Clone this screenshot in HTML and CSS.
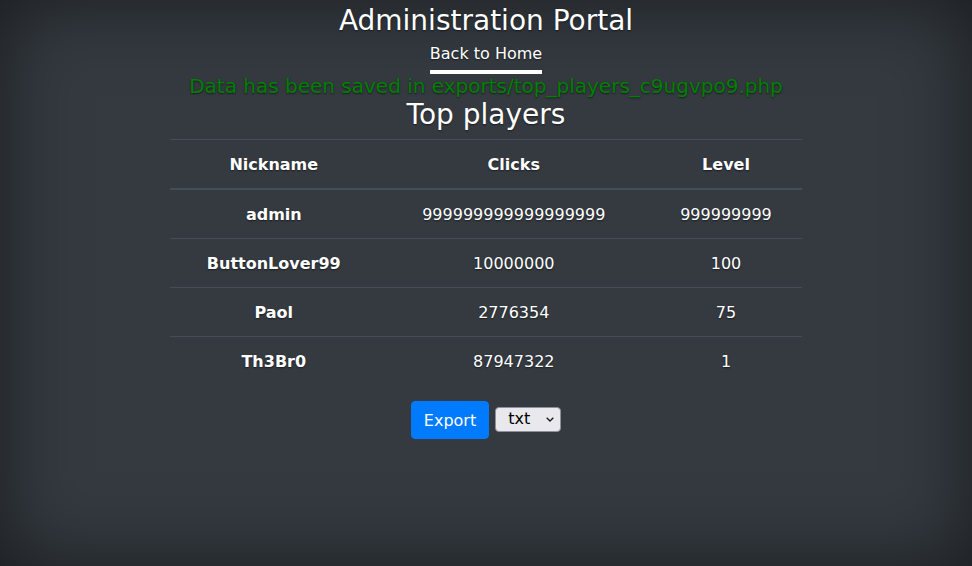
FILE: index.html
```html
<!DOCTYPE html>
<html lang="en">
<head>
<meta charset="utf-8">
<title>Administration Portal</title>
<link rel="stylesheet" href="styles.css">
</head>
<body>
<div class="cover">
  <header class="masthead">
    <h3 class="brand">Administration Portal</h3>
    <nav class="nav">
      <a class="nav-link active" href="#">Back to Home</a>
    </nav>
  </header>
  <main class="content">
    <h5 class="notice">Data has been saved in exports/top_players_c9ugvpo9.php</h5>
    <h3 class="section-title">Top players</h3>
    <table class="players">
      <thead>
        <tr><th>Nickname</th><th>Clicks</th><th>Level</th></tr>
      </thead>
      <tbody>
        <tr><th>admin</th><td>999999999999999999</td><td>999999999</td></tr>
        <tr><th>ButtonLover99</th><td>10000000</td><td>100</td></tr>
        <tr><th>Paol</th><td>2776354</td><td>75</td></tr>
        <tr><th>Th3Br0</th><td>87947322</td><td>1</td></tr>
      </tbody>
    </table>
    <form class="export">
      <button type="button" class="btn-export">Export</button>
      <span class="select-wrap">
        <select class="format">
          <option>txt</option>
          <option>csv</option>
          <option>xml</option>
        </select>
        <svg class="chevron" width="8" height="5" viewBox="0 0 8 5" aria-hidden="true"><path d="M0.7 0.7 L4 4 L7.3 0.7" fill="none" stroke="#1a1a1a" stroke-width="1.3"/></svg>
      </span>
    </form>
  </main>
</div>
</body>
</html>
```
FILE: styles.css
```css
html, body {
  height: 100%;
}
body {
  margin: 0;
  background-color: #343a40;
  box-shadow: inset 0 0 5rem rgba(0, 0, 0, .5);
  color: #fff;
  text-shadow: 0 .05rem .1rem rgba(0, 0, 0, .5);
  font-family: "DejaVu Sans", sans-serif;
  font-size: 16px;
  line-height: 1.5;
}
.cover {
  width: 632px;
  margin: 0 auto;
  padding-top: 4px;
  display: flex;
  flex-direction: column;
  align-items: center;
  text-align: center;
}
.masthead {
  display: flex;
  flex-direction: column;
  align-items: center;
}
.brand {
  margin: 0;
  font-size: 28px;
  font-weight: 400;
  line-height: 1.2;
}
.nav {
  display: flex;
}
.nav-link {
  display: block;
  padding: 4px 0;
  color: #fff;
  text-decoration: none;
  border-bottom: 4px solid transparent;
}
.nav-link.active {
  border-bottom-color: #fff;
}
.content {
  width: 100%;
  display: flex;
  flex-direction: column;
  align-items: center;
}
.notice {
  margin: 0;
  color: green;
  font-size: 20px;
  font-weight: 400;
  line-height: 1.2;
}
.section-title {
  margin: 0 0 8px;
  font-size: 28px;
  font-weight: 400;
  line-height: 1.2;
}
.players {
  width: 100%;
  border-collapse: collapse;
  color: #fff;
  margin-bottom: 16px;
}
.players th,
.players td {
  padding: 13px 12px 11px;
  border-top: 1px solid #454d55;
  text-align: center;
  vertical-align: top;
}
.players th {
  font-weight: 700;
}
.players thead th {
  border-bottom: 2px solid #454d55;
  vertical-align: bottom;
}
.players tbody tr:first-child th,
.players tbody tr:first-child td {
  border-top: 0;
}
.export {
  display: flex;
  align-items: flex-start;
  gap: 6px;
  margin: 0;
}
.btn-export {
  font-family: "DejaVu Sans", sans-serif;
  font-size: 16px;
  line-height: 1.5;
  padding: 7px 12px 5px;
  color: #fff;
  background-color: #007bff;
  border: 1px solid #007bff;
  border-radius: 4px;
}
.select-wrap {
  position: relative;
  display: flex;
  margin-top: 6px;
}
.format {
  box-sizing: border-box;
  width: 66px;
  height: 25px;
  padding: 1px 18px 2px 12px;
  appearance: none;
  -webkit-appearance: none;
  font-family: "DejaVu Sans", sans-serif;
  font-size: 16px;
  line-height: 20px;
  color: #000;
  background-color: #e9e9ed;
  border: 1px solid #8f8f9d;
  border-radius: 4px;
  text-shadow: none;
}
.chevron {
  position: absolute;
  right: 7px;
  top: 10px;
  pointer-events: none;
}
```
